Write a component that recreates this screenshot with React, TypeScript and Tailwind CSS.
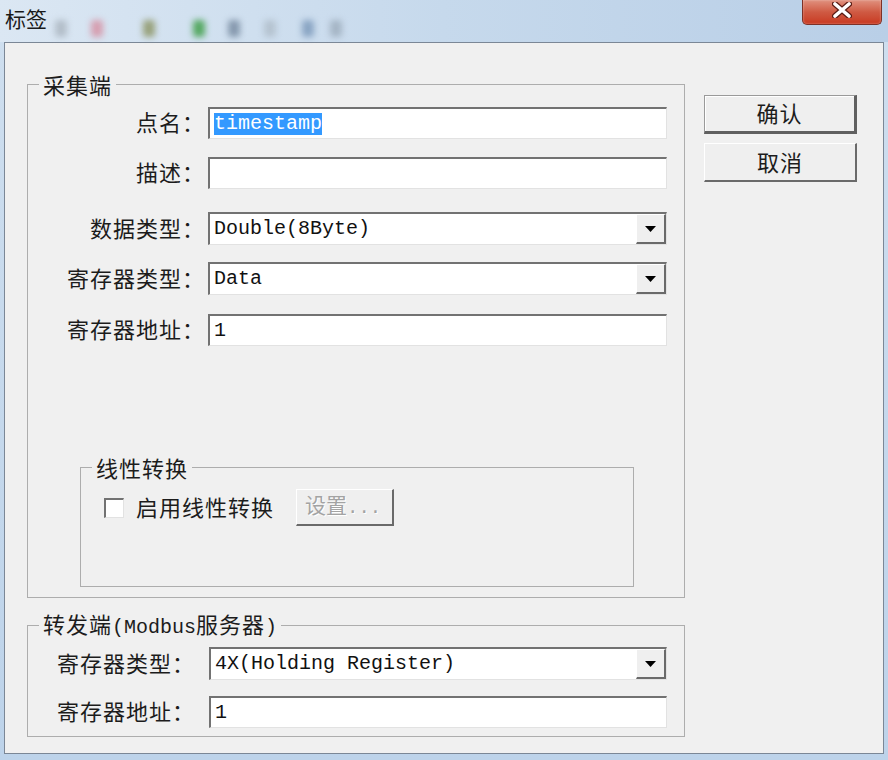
import React from "react";

const cjk = "font-['Noto_Sans_CJK_SC','Noto_Sans',sans-serif]";
const mono = "font-['Liberation_Mono','Noto_Sans_CJK_SC',monospace]";
const sunken =
  "bg-white border-t-2 border-l-2 border-r border-b border-t-[#727272] border-l-[#727272] border-r-[#e2e2e2] border-b-[#e2e2e2]";

function Arrow() {
  return (
    <svg width="11" height="6" viewBox="0 0 11 6">
      <path d="M0 0H11L5.5 6Z" fill="#000" />
    </svg>
  );
}

function Combo({ value }: { value: string }) {
  return (
    <div className={`${sunken} h-[33px] flex items-stretch`}>
      <div className={`${mono} text-[20px] leading-[30px] pl-[4px] flex-1 text-[#111]`}>{value}</div>
      <div className="w-[30px] bg-[#efefef] border-t border-l border-t-white border-l-white border-r-2 border-b-2 border-r-[#6a6a6a] border-b-[#6a6a6a] flex items-center justify-center">
        <Arrow />
      </div>
    </div>
  );
}

function Field({ children }: { children?: React.ReactNode }) {
  return (
    <div className={`${sunken} h-[32px] flex items-center pl-[4px] ${mono} text-[20px] text-[#111]`}>
      {children}
    </div>
  );
}

function Label({ text, w }: { text: string; w: string }) {
  return (
    <div className={`${w} shrink-0 text-right ${cjk} text-[22px] leading-[28px] pb-[4px] tracking-[1px] text-[#1c1c1c]`}>
      {text}
    </div>
  );
}

function Legend({ children }: { children: React.ReactNode }) {
  return (
    <legend className={`${cjk} text-[22px] leading-[22px] tracking-[1px] ml-[11px] px-[4px] text-[#1c1c1c] whitespace-nowrap`}>
      {children}
    </legend>
  );
}

function Blob({ c, ml }: { c: string; ml: string }) {
  return <div className={`${ml} mt-[20px] w-[12px] h-[17px] rounded-[3px] blur-[3px] ${c}`} />;
}

export default function App() {
  return (
    <div className="w-[888px] h-[760px] overflow-hidden flex flex-col bg-gradient-to-b from-[#cfdfef] to-[#bdd3ea]">
      {/* title bar */}
      <div className="h-[42px] shrink-0 flex items-start bg-gradient-to-r from-[#dbe7f3] via-[#c6d9ec] to-[#b9cfe7]">
        <div className={`${cjk} text-[21px] leading-[24px] pl-[5px] pt-[6px] text-[#1a1a1a]`}>标签</div>
        <Blob c="bg-[#b3bec9]" ml="ml-[8px]" />
        <Blob c="bg-[#d69fb1]" ml="ml-[24px]" />
        <Blob c="bg-[#98a27c]" ml="ml-[40px]" />
        <Blob c="bg-[#55a862]" ml="ml-[38px]" />
        <Blob c="bg-[#8699ae]" ml="ml-[23px]" />
        <Blob c="bg-[#b5c3d0]" ml="ml-[24px]" />
        <Blob c="bg-[#8aa5c3]" ml="ml-[26px]" />
        <Blob c="bg-[#a5b5c5]" ml="ml-[16px]" />
        <div className="ml-auto mr-[6px] w-[80px] h-[25px] rounded-b-[5px] border border-t-0 border-[#7d3127] bg-gradient-to-b from-[#e0907e] via-[#cf5a43] to-[#c8381f] flex justify-center pt-[2px] shadow-[inset_0_0_2px_rgba(255,255,255,0.5)]">
          <svg width="20" height="16" viewBox="0 0 20 16">
            <path d="M3 2L17 14M17 2L3 14" stroke="#5a1c14" strokeWidth="6" strokeLinecap="round" />
            <path d="M3 2L17 14M17 2L3 14" stroke="#ffffff" strokeWidth="3.6" strokeLinecap="round" />
          </svg>
        </div>
      </div>

      {/* client area */}
      <div className="ml-[4px] w-[880px] h-[712px] shrink-0 border border-[#7b8796] bg-[#f0f0f0] flex pl-[22px]">
        {/* left column */}
        <div className="w-[658px] pt-[30px] flex flex-col">
          <fieldset className="block border border-[#adadad] h-[525px] w-[658px]">
            <Legend>采集端</Legend>
            <div className="flex flex-col">
              <div className="flex items-center mt-[12px]">
                <Label text="点名：" w="w-[177px]" />
                <div className="ml-[3px] w-[459px]">
                  <Field>
                    <span className="bg-[#3399ff] text-white leading-[22px]">timestamp</span>
                  </Field>
                </div>
              </div>
              <div className="flex items-center mt-[18px]">
                <Label text="描述：" w="w-[177px]" />
                <div className="ml-[3px] w-[459px]">
                  <Field />
                </div>
              </div>
              <div className="flex items-center mt-[23px]">
                <Label text="数据类型：" w="w-[177px]" />
                <div className="ml-[3px] w-[459px]">
                  <Combo value="Double(8Byte)" />
                </div>
              </div>
              <div className="flex items-center mt-[17px]">
                <Label text="寄存器类型：" w="w-[177px]" />
                <div className="ml-[3px] w-[459px]">
                  <Combo value="Data" />
                </div>
              </div>
              <div className="flex items-center mt-[19px]">
                <Label text="寄存器地址：" w="w-[177px]" />
                <div className="ml-[3px] w-[459px]">
                  <Field>1</Field>
                </div>
              </div>

              <fieldset className="block border border-[#adadad] ml-[52px] mt-[110px] w-[554px] h-[131px]">
                <Legend>线性转换</Legend>
                <div className="flex items-center mt-[11px] pl-[23px]">
                  <div className={`${sunken} w-[20px] h-[20px]`} />
                  <div className={`${cjk} ml-[12px] text-[22px] leading-[28px] pb-[4px] tracking-[1px] text-[#1c1c1c] whitespace-nowrap`}>启用线性转换</div>
                  <div className="ml-[22px] w-[98px] h-[37px] shrink-0 bg-[#efefef] border-t border-l border-t-white border-l-white border-r-2 border-b-2 border-r-[#6a6a6a] border-b-[#6a6a6a] flex items-center pl-[8px] overflow-hidden">
                    <span className={`${cjk} text-[21px] leading-[26px] pb-[3px] text-[#a3a3a3] [text-shadow:1px_1px_0_#ffffff] whitespace-nowrap`}>
                      设置<span className={`${mono} text-[19px]`}>...</span>
                    </span>
                  </div>
                </div>
              </fieldset>
            </div>
          </fieldset>

          <fieldset className="block border border-[#adadad] h-[125px] w-[658px] mt-[14px]">
            <Legend>
              转发端<span className={`${mono} text-[20px] tracking-normal`}>(Modbus</span>服务器<span className={`${mono} text-[20px] tracking-normal`}>)</span>
            </Legend>
            <div className="flex items-center mt-[8px]">
              <Label text="寄存器类型：" w="w-[167px]" />
              <div className="ml-[14px] w-[458px]">
                <Combo value="4X(Holding Register)" />
              </div>
            </div>
            <div className="flex items-center mt-[16px]">
              <Label text="寄存器地址：" w="w-[167px]" />
              <div className="ml-[14px] w-[458px]">
                <Field>1</Field>
              </div>
            </div>
          </fieldset>
        </div>

        {/* right column */}
        <div className="ml-[19px] pt-[52px] flex flex-col gap-[9px]">
          <div className="w-[153px] h-[39px] bg-[#efefef] border-t border-l border-t-[#9a9a9a] border-l-[#9a9a9a] border-r-[3px] border-b-[3px] border-r-[#606060] border-b-[#606060] shadow-[inset_1px_1px_0_#ffffff] flex items-center justify-center">
            <span className={`${cjk} text-[22px] leading-[28px] pb-[3px] tracking-[1px] text-[#1c1c1c]`}>确认</span>
          </div>
          <div className="w-[153px] h-[39px] bg-[#efefef] border-t border-l border-t-white border-l-white border-r-2 border-b-2 border-r-[#6a6a6a] border-b-[#6a6a6a] flex items-center justify-center">
            <span className={`${cjk} text-[22px] leading-[28px] pb-[3px] tracking-[1px] text-[#1c1c1c]`}>取消</span>
          </div>
        </div>
      </div>
    </div>
  );
}
